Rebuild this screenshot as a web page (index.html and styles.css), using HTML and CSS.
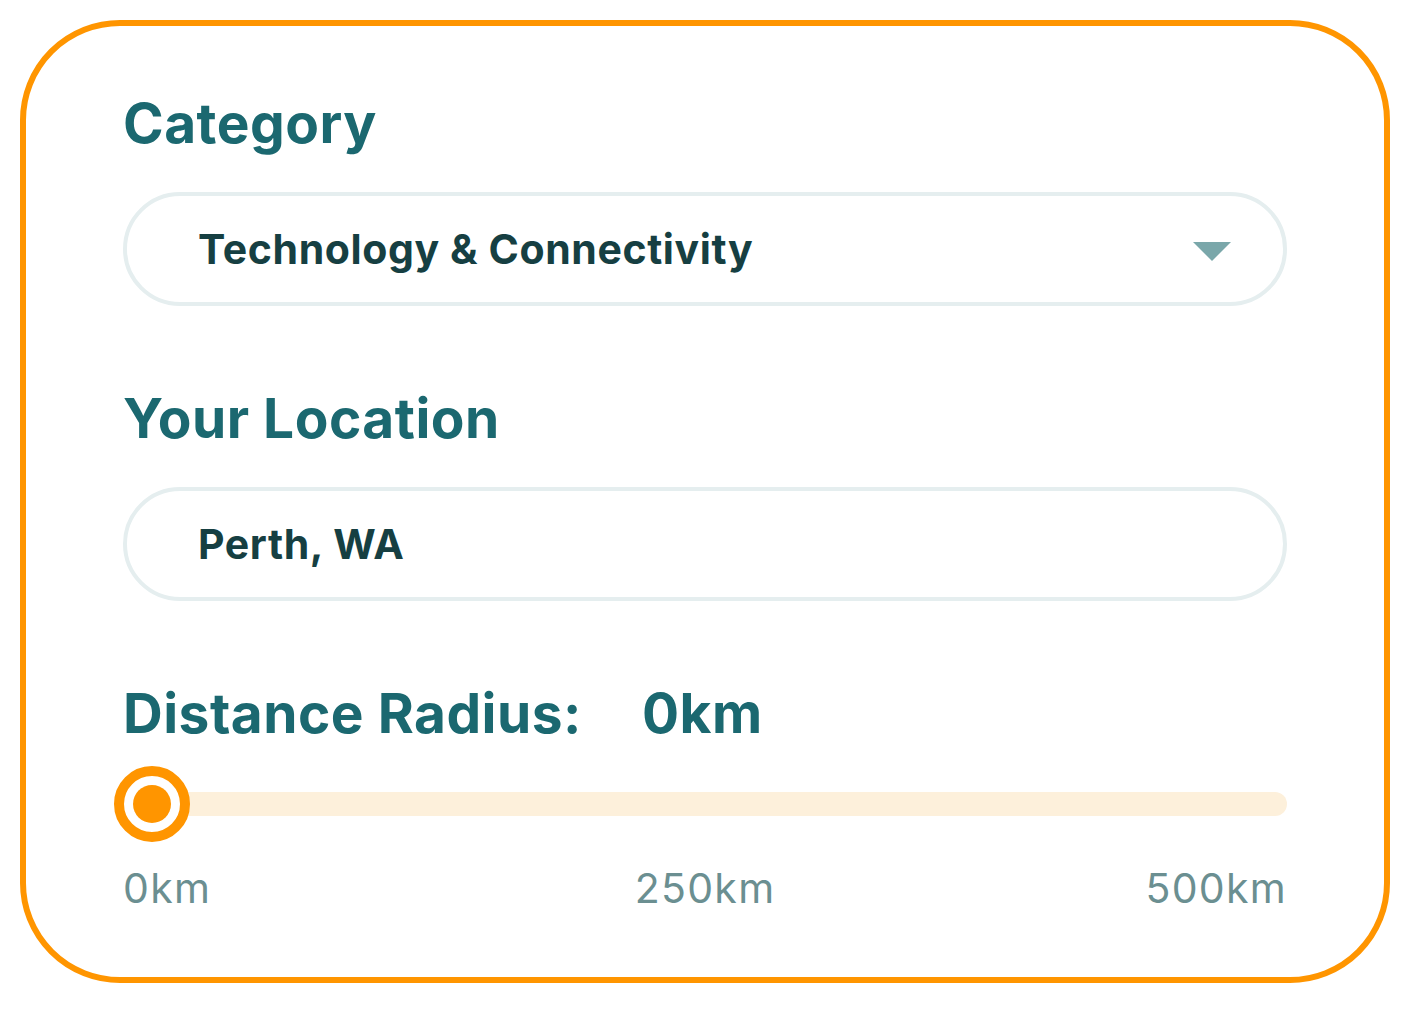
FILE: index.html
```html
<!DOCTYPE html>
<html>
<head>
<meta charset="utf-8">
<link rel="stylesheet" href="styles.css">
</head>
<body>
<div class="card">
  <div class="field">
    <div class="label">Category</div>
    <div class="box select">
      <span class="value">Technology &amp; Connectivity</span>
      <svg class="caret" width="38" height="19" viewBox="0 0 38 19"><polygon points="0,0 38,0 19,19" fill="#7aa7aa"/></svg>
    </div>
  </div>
  <div class="field">
    <div class="label">Your Location</div>
    <div class="box">
      <span class="value">Perth, WA</span>
    </div>
  </div>
  <div class="field">
    <div class="label radius-label"><span>Distance Radius:</span><span class="radius-value">0km</span></div>
    <div class="slider">
      <div class="track"></div>
      <div class="thumb"><div class="dot"></div></div>
    </div>
    <div class="ticks"><span class="t-start">0km</span><span class="t-mid">250km</span><span class="t-end">500km</span></div>
  </div>
</div>
</body>
</html>
```
FILE: styles.css
```css
html, body { margin: 0; padding: 0; background: #fff; }
body { padding: 20px; font-family: Inter, "Noto Sans", sans-serif; }
.card {
  width: 1370px;
  height: 963px;
  box-sizing: border-box;
  border: 6px solid #ff9500;
  border-radius: 100px;
  padding: 67px 97px 0 97px;
  display: flex;
  flex-direction: column;
  gap: 82px;
}
.field { display: flex; flex-direction: column; }
.label {
  font-size: 55px;
  line-height: 60px;
  font-weight: 700;
  color: #1b6870;
  letter-spacing: 0.5px;
}
.box {
  margin-top: 39px;
  height: 114px;
  box-sizing: border-box;
  border: 4px solid #e5eeef;
  border-radius: 57px;
  display: flex;
  align-items: center;
  padding: 0 52px 0 71px;
}
.value {
  font-size: 41px;
  font-weight: 700;
  color: #163f42;
  letter-spacing: 0.6px;
  flex: 1;
}
.caret { display: block; margin-top: 4px; }
.radius-label { display: flex; gap: 60px; }
.slider {
  margin-top: 23px;
  position: relative;
  height: 76px;
  display: flex;
  align-items: center;
  margin-left: -9px;
}
.track {
  margin-left: 9px;
  flex: 1;
  height: 24px;
  border-radius: 12px;
  background: #fdf0db;
}
.thumb {
  position: absolute;
  left: 0;
  top: 0;
  width: 76px;
  height: 76px;
  box-sizing: border-box;
  border-radius: 50%;
  border: 10px solid #ff9500;
  background: #fff;
  display: flex;
  align-items: center;
  justify-content: center;
}
.dot { width: 38px; height: 38px; border-radius: 50%; background: #ff9500; }
.ticks {
  margin-top: 21px;
  display: grid;
  grid-template-columns: 1fr auto 1fr;
  font-size: 41px;
  line-height: 50px;
  color: #6b8f91;
  letter-spacing: 1.3px;
}
.t-start { justify-self: start; }
.t-mid { justify-self: center; }
.t-end { justify-self: end; }
```
